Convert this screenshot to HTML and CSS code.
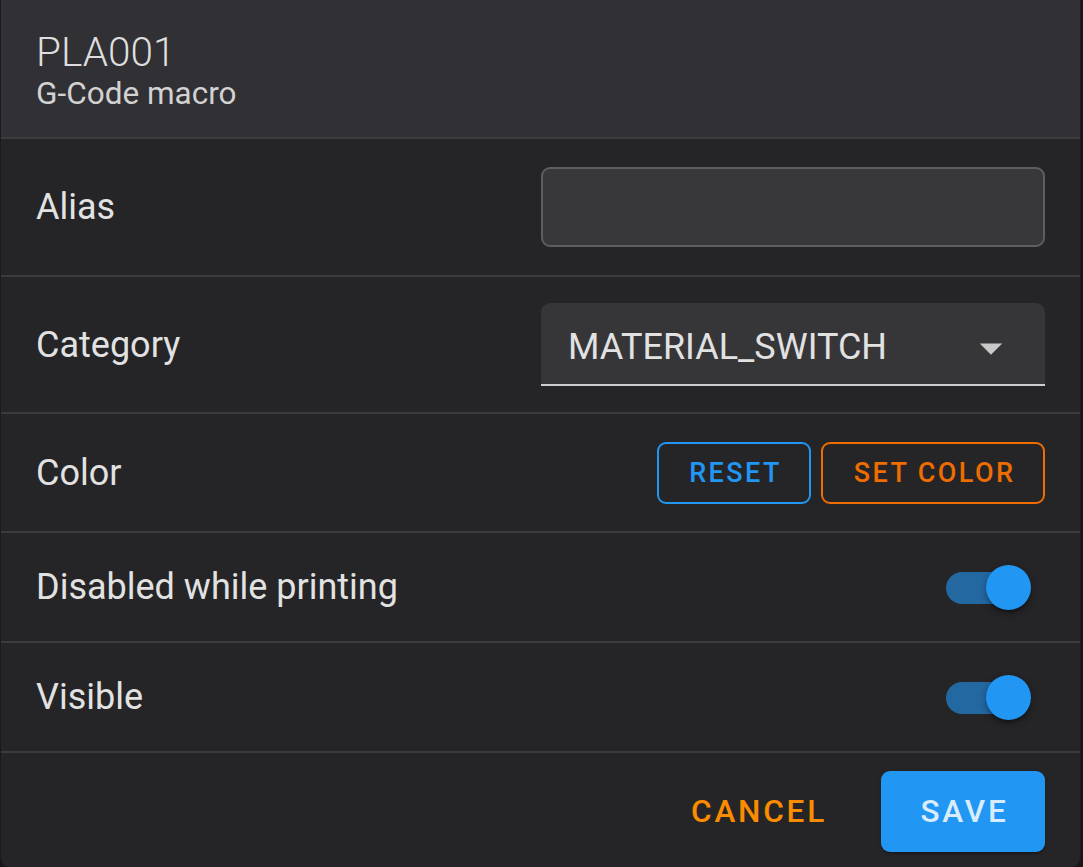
FILE: index.html
```html
<!DOCTYPE html>
<html lang="en">
<head>
<meta charset="utf-8">
<title>PLA001</title>
<link rel="stylesheet" href="styles.css">
</head>
<body>
<div class="dialog">
  <div class="header">
    <div class="title">PLA001</div>
    <div class="subtitle">G-Code macro</div>
  </div>
  <div class="row row-alias">
    <div class="label">Alias</div>
    <div class="text-input"></div>
  </div>
  <div class="row row-category">
    <div class="label">Category</div>
    <div class="select">
      <span class="select-value">MATERIAL_SWITCH</span>
      <svg class="select-arrow" viewBox="0 0 24 24" width="54" height="54"><path d="M7,10L12,15L17,10H7Z" fill="#c9c9c9"/></svg>
    </div>
  </div>
  <div class="row row-color">
    <div class="label">Color</div>
    <div class="btn-group">
      <button class="btn-outline btn-blue">RESET</button>
      <button class="btn-outline btn-orange">SET COLOR</button>
    </div>
  </div>
  <div class="row row-switch">
    <div class="label">Disabled while printing</div>
    <div class="switch"><div class="track"></div><div class="thumb"></div></div>
  </div>
  <div class="row row-switch">
    <div class="label">Visible</div>
    <div class="switch"><div class="track"></div><div class="thumb"></div></div>
  </div>
  <div class="footer">
    <button class="btn-text">CANCEL</button>
    <button class="btn-save">SAVE</button>
  </div>
</div>
</body>
</html>
```
FILE: styles.css
```css
html, body {
  margin: 0;
  padding: 0;
  background: #161618;
  font-family: Roboto, "Liberation Sans", sans-serif;
}
.dialog {
  width: 1081px;
  height: 867px;
  box-sizing: border-box;
  background: #252527;
  border-left: 1px solid #1b1b1d;
  border-right: 1px solid #1b1b1d;
  border-radius: 0 0 9px 9px;
  overflow: hidden;
  display: flex;
  flex-direction: column;
}
.header {
  height: 139px;
  box-sizing: border-box;
  background: #313034;
  border-bottom: 2px solid #3c3c3f;
  padding: 30px 0 0 35px;
  color: #dedede;
}
.title {
  font-size: 40.5px;
  line-height: 45px;
  font-weight: 300;
  margin-bottom: 1px;
}
.subtitle {
  font-size: 31.5px;
  line-height: 36px;
  font-weight: 400;
  color: #d2d2d2;
}
.row {
  display: flex;
  align-items: center;
  justify-content: space-between;
  padding: 0 35px 0 35px;
  border-bottom: 2px solid #3b3b3d;
  box-sizing: border-box;
}
.label {
  font-size: 36px;
  color: #e2e2e2;
  line-height: 42px;
}
.row-alias { height: 138px; }
.row-category { height: 137px; }
.row-color { height: 119px; }
.row-switch { height: 110px; }
.text-input {
  width: 504px;
  height: 80px;
  box-sizing: border-box;
  background: #38383b;
  border: 2px solid #5e5e61;
  border-radius: 9px;
}
.select {
  width: 504px;
  height: 83px;
  box-sizing: border-box;
  background: #363639;
  border-bottom: 2px solid #cfcfcf;
  border-radius: 9px 9px 0 0;
  display: flex;
  align-items: center;
  justify-content: space-between;
  padding: 6px 27px 0 27px;
}
.select-value {
  font-size: 36px;
  color: #e2e2e2;
  line-height: 42px;
}
.select-arrow {
  display: block;
  margin-top: 2px;
}
.btn-group {
  display: flex;
  gap: 10px;
}
.btn-outline {
  height: 62px;
  box-sizing: border-box;
  background: transparent;
  border: 2px solid;
  border-radius: 9px;
  font-family: Roboto, "Liberation Sans", sans-serif;
  font-size: 27px;
  font-weight: 500;
  letter-spacing: 2.4px;
  padding: 0 0 0 3px;
  white-space: nowrap;
  cursor: pointer;
}
.btn-blue {
  color: #2196f3;
  border-color: #2196f3;
  width: 154px;
}
.btn-orange {
  color: #ef6c00;
  border-color: #ef6c00;
  width: 224px;
}
.switch {
  position: relative;
  width: 85px;
  height: 45px;
  margin-right: 14px;
}
.track {
  position: absolute;
  left: 0;
  top: 7px;
  width: 81px;
  height: 32px;
  border-radius: 16px;
  background: #2468a1;
}
.thumb {
  position: absolute;
  right: 0;
  top: 0;
  width: 45px;
  height: 45px;
  border-radius: 50%;
  background: #2196f3;
  box-shadow: 0 4px 3px -2px rgba(0,0,0,0.3), 0 3px 6px 0 rgba(0,0,0,0.2), 0 2px 9px 0 rgba(0,0,0,0.15);
}
.footer {
  flex: 1;
  display: flex;
  justify-content: flex-end;
  align-items: flex-start;
  padding: 18px 35px 0 0;
  gap: 18px;
}
.btn-text {
  height: 81px;
  background: transparent;
  border: 0;
  color: #fb8c00;
  font-family: Roboto, "Liberation Sans", sans-serif;
  font-size: 31.5px;
  font-weight: 500;
  letter-spacing: 2.8px;
  padding: 0 36px;
  cursor: pointer;
}
.btn-save {
  height: 81px;
  width: 164px;
  background: #2196f3;
  border: 0;
  border-radius: 9px;
  color: #d9ecfc;
  font-family: Roboto, "Liberation Sans", sans-serif;
  font-size: 31.5px;
  font-weight: 500;
  letter-spacing: 2.8px;
  padding: 0 0 0 3px;
  box-shadow: 0 3px 2px -2px rgba(0,0,0,0.3), 0 2px 4px 0 rgba(0,0,0,0.2);
  cursor: pointer;
}
```
